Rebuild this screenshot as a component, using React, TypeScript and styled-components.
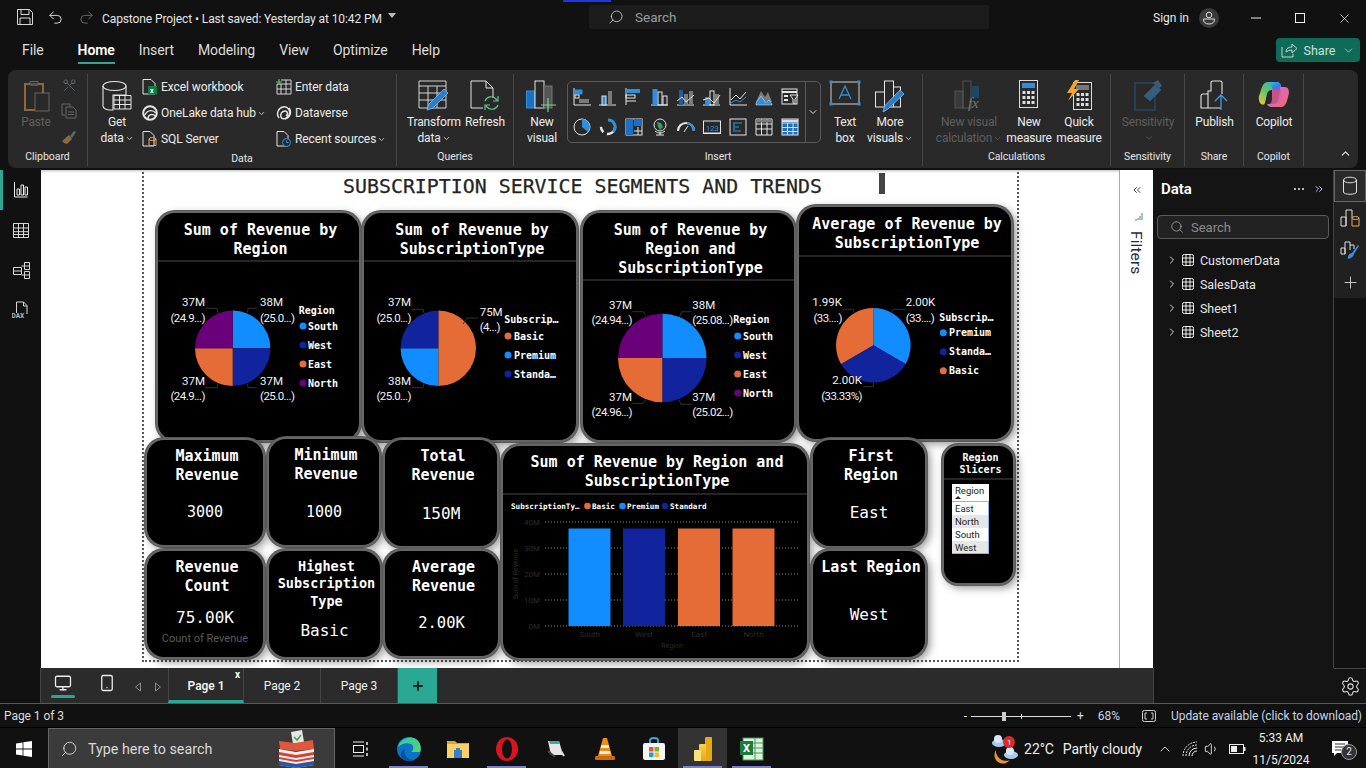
import React from "react";
import styled, { createGlobalStyle } from "styled-components";
import { Search, ChevronDown, ChevronRight, ChevronUp, ChevronsLeft, ChevronsRight, X, Settings, Scissors, Undo2, Redo2, Plus, Monitor, Smartphone, Volume1 } from "lucide-react";

const UI = `Roboto, "Open Sans", sans-serif`;
const MONO = `"DejaVu Sans Mono", "Liberation Mono", monospace`;
const BLUE = "#118DFF", NAVY = "#12239E", ORANGE = "#E66C37", PURPLE = "#6B007B", TEAL = "#2aa893";

const Global = createGlobalStyle`
  html, body { margin: 0; padding: 0; background: #111; overflow: hidden; }
  * { box-sizing: border-box; }
  #root { width: 1366px; height: 768px; }
`;

const Page = styled.div`width:1366px;height:768px;display:flex;flex-direction:column;background:#111;color:#eee;font-family:${UI};overflow:hidden;`;

/* ---------- Title bar ---------- */
const TitleBar = styled.div`height:36px;display:flex;align-items:center;position:relative;flex:none;`;
const TitleLeft = styled.div`width:589px;display:flex;align-items:center;padding-left:17px;gap:14px;flex:none;margin-top:-2px;`;
const DocTitle = styled.span`font-size:12px;color:#e4e4e4;margin-left:-7px;margin-top:4px;white-space:nowrap;letter-spacing:-.1px;`;
const Caret = styled.span`width:0;height:0;border-left:4.5px solid transparent;border-right:4.5px solid transparent;border-top:5px solid #bbb;margin-left:-8px;margin-top:-3px;`;
const TopSearch = styled.div`width:400px;height:24px;margin-top:-2px;background:#1c1c1c;border-radius:2px;display:flex;align-items:center;gap:11px;padding-left:19px;font-size:13.5px;color:#9c9c9c;flex:none;`;
const TopLine = styled.div`position:absolute;left:563px;top:0;width:48px;height:2px;background:#2236e0;`;
const TitleRight = styled.div`flex:1;display:flex;align-items:center;justify-content:flex-end;`;
const SignIn = styled.span`font-size:12px;color:#e8e8e8;margin-right:10px;`;
const Avatar = styled.span`width:20px;height:20px;border-radius:50%;background:#3a3a3a;display:flex;align-items:center;justify-content:center;margin-right:15px;`;
const WinCtl = styled.span`width:44px;display:flex;justify-content:center;color:#eee;`;
const FlipSearch = styled(Search)`transform:scaleX(-1);flex:none;`;

/* ---------- Menu ---------- */
const MenuBar = styled.div`height:34px;display:flex;align-items:center;padding:0 0 6px 22px;gap:24px;flex:none;position:relative;`;
const MenuItem = styled.span<{ $active?: boolean }>`
  font-size:14px;color:${p => (p.$active ? "#fff" : "#dcdcdc")};font-weight:${p => (p.$active ? 600 : 400)};
  position:relative;line-height:28px;letter-spacing:-.1px;
  ${p => p.$active ? `&::after{content:"";position:absolute;left:0;right:0;bottom:0;height:2px;background:${TEAL};}` : ""}
  &:first-child{margin-right:10px;}
`;
const ShareBtn = styled.div`position:absolute;left:1276px;top:2px;width:84px;height:24px;background:#0d6b58;border-radius:4px;display:flex;align-items:center;justify-content:center;gap:7px;font-size:12.5px;color:#cfe3dd;`;

/* ---------- Ribbon ---------- */
const Ribbon = styled.div`margin-left:8px;width:1350px;height:98px;background:#292929;border-radius:8px;display:flex;flex:none;position:relative;`;
const Group = styled.div<{ $w: number }>`
  width:${p => p.$w}px;flex:none;display:flex;flex-direction:column;margin:4px 0 2px;border-right:1px solid #484848;
`;
const GroupBody = styled.div<{ $pl?: number }>`height:74px;display:flex;padding-left:${p => p.$pl ?? 0}px;`;
const GroupLabel = styled.div`flex:1;text-align:center;font-size:10.5px;color:#e6e6e6;line-height:18px;padding-top:2px;letter-spacing:-.05px;`;
const Big = styled.div<{ $w: number; $dim?: boolean }>`
  width:${p => p.$w}px;flex:none;display:flex;flex-direction:column;align-items:center;padding-top:6px;
  font-size:12px;line-height:16px;text-align:center;color:${p => (p.$dim ? "#5f5f5f" : "#ececec")};white-space:nowrap;letter-spacing:-.18px;
`;
const BigIcon = styled.div`height:34px;display:flex;align-items:flex-start;justify-content:center;flex:none;`;
const Chev = styled(ChevronDown)`display:inline-block;vertical-align:-1px;margin-left:1px;`;
const SmallCol = styled.div<{ $w: number; $pl?: number }>`width:${p => p.$w}px;flex:none;display:flex;flex-direction:column;padding-left:${p => p.$pl ?? 0}px;`;
const SmallRow = styled.div`height:26px;flex:none;display:flex;align-items:center;gap:3px;font-size:12px;color:#ececec;white-space:nowrap;letter-spacing:-.08px;`;
const ToolCol = styled.div`width:16px;margin-top:4px;display:flex;flex-direction:column;gap:10px;align-items:center;flex:none;`;
const Gallery = styled.div`width:254px;height:62px;margin:7px 7px 0 3px;border:1px solid #5a5a5a;border-radius:5px;display:flex;flex:none;`;
const GalleryGrid = styled.div`width:237px;display:grid;grid-template-columns:repeat(9,26px);grid-template-rows:30px 30px;align-items:center;justify-items:center;padding-left:1px;`;
const GalleryMore = styled.div`flex:1;border-left:1px solid #5a5a5a;display:flex;align-items:center;justify-content:center;color:#ddd;`;
const Collapse = styled.div`position:absolute;right:6px;bottom:4px;color:#e8e8e8;`;
const ScissorIcon = styled(Scissors)`transform:rotate(90deg);flex:none;`;

/* ---------- Main ---------- */
const Main = styled.div`height:498px;margin-top:2px;display:flex;flex:none;`;
const LeftRail = styled.div`width:41px;flex:none;background:#111;display:flex;flex-direction:column;align-items:center;position:relative;`;
const RailBtn = styled.div<{ $active?: boolean }>`
  width:41px;height:40px;display:flex;align-items:center;justify-content:center;position:relative;
  ${p => p.$active ? `&::before{content:"";position:absolute;left:0;top:0;bottom:0;width:3px;background:${TEAL};}` : ""}
`;
const Canvas = styled.div`width:1078px;flex:none;background:#fff;position:relative;overflow:hidden;box-shadow:inset 0 3px 3px -2px #bbb;`;
const ReportPage = styled.div`position:absolute;left:101px;top:-6px;width:877px;height:498px;border:2px dotted #555;border-top:none;`;
const ReportTitle = styled.div`position:absolute;left:0;top:11px;width:870px;padding-left:199px;font-family:${MONO};font-size:19.9px;line-height:24px;color:#252423;white-space:nowrap;-webkit-text-stroke:.25px #252423;`;
const Cursor = styled.span`position:absolute;left:735px;top:9px;width:6px;height:21px;background:#444;`;

const Card = styled.div<{ $x: number; $y: number; $w: number; $h: number; $r?: number }>`
  position:absolute;left:${p => p.$x - 144}px;top:${p => p.$y - 164}px;width:${p => p.$w}px;height:${p => p.$h}px;
  background:#000;border:2px solid #666;border-radius:${p => p.$r ?? 19}px;box-shadow:0 0 0 1px #5a5a5a,3px 3px 9px rgba(0,0,0,.42);color:#fff;overflow:hidden;
  font-family:${MONO};
`;
const CardTitle = styled.div<{ $h?: number; $rule?: boolean; $size?: number; $lh?: number; $pt?: number }>`
  ${p => (p.$h ? `height:${p.$h}px;` : "")}padding:${p => p.$pt ?? 7}px 0 0 4px;text-align:center;font-weight:700;font-size:${p => p.$size ?? 15}px;line-height:${p => p.$lh ?? 19}px;white-space:nowrap;
  ${p => (p.$rule ? "border-bottom:2px solid #252525;" : "")}
`;
const KpiValue = styled.div<{ $top: number; $size?: number }>`
  margin-top:${p => p.$top}px;text-align:center;font-size:${p => p.$size ?? 16}px;line-height:20px;
`;
const KpiSub = styled.div`text-align:center;font-family:${UI};font-size:11px;color:#5a5a5a;line-height:14px;margin-top:4px;`;
const ChartSvg = styled.svg`display:block;`;
const LabelText = styled.text<{ $tight?: boolean }>`font-family:${UI};font-size:11.5px;fill:#f2f2f2;letter-spacing:${p => (p.$tight ? "-.55px" : "0")};`;
const LegendText = styled.text<{ $s?: number }>`font-family:${MONO};font-weight:700;font-size:${p => p.$s ?? 10}px;fill:#fff;`;
const AxisText = styled.text<{ $s?: number }>`font-family:${UI};font-size:${p => p.$s ?? 8}px;fill:#2f2b29;`;
const SlicerBox = styled.div`width:37px;margin:4px 0 0 8px;font-family:${UI};font-size:9.5px;color:#252423;background:#fff;`;
const SlicerHead = styled.div`height:18px;padding:2px 0 0 3px;line-height:10px;position:relative;border-bottom:1px solid #7fb7ef;&::after{content:"";position:absolute;left:3px;bottom:2px;border-left:3px solid transparent;border-right:3px solid transparent;border-bottom:3px solid #252423;}`;
const SlicerItem = styled.div<{ $alt?: boolean }>`height:13px;line-height:13px;padding-left:3px;background:${p => (p.$alt ? "#e6e6e6" : "#fff")};border-right:1px solid #7fb7ef;&:last-child{border-bottom:1px solid #7fb7ef;}`;

const FilterPane = styled.div`width:34px;flex:none;background:#fff;border-left:1px solid #aaa;display:flex;flex-direction:column;align-items:center;color:#252423;position:relative;padding-top:14px;`;
const FilterGlyph = styled.div`margin-top:16px;margin-left:5px;`;
const FiltersLabel = styled.div`writing-mode:vertical-rl;font-size:15.5px;line-height:18px;color:#1a2b44;margin-top:9px;margin-left:-1px;letter-spacing:.1px;`;
const DataPane = styled.div`width:180px;flex:none;background:#141414;padding:0 4px;display:flex;flex-direction:column;`;
const DataHead = styled.div`height:38px;display:flex;align-items:center;padding-left:4px;`;
const DataTitle = styled.span`font-size:15px;font-weight:600;color:#fff;flex:1;`;
const PaneCollapse = styled(ChevronsRight)`margin:0 4px 0 7px;flex:none;`;
const DataSearch = styled.div`height:24px;margin-top:7px;border:1px solid #5a5a5a;border-radius:4px;background:#222;display:flex;align-items:center;gap:7px;padding-left:12px;font-size:13px;color:#8d8d8d;`;
const TreeList = styled.div`margin-top:9px;display:flex;flex-direction:column;`;
const TreeRow = styled.div`height:24px;display:flex;align-items:center;font-size:12.5px;color:#e6e6e6;padding-left:9px;gap:4px;letter-spacing:-.05px;`;
const TreeName = styled.span`margin-left:2px;`;
const RightRail = styled.div`width:33px;flex:none;background:#111;border-left:1px solid #444;display:flex;flex-direction:column;position:relative;`;
const RightTop = styled.div`background:#202020;height:128px;display:flex;flex-direction:column;align-items:center;`;
const RightBtn = styled.div<{ $active?: boolean }>`
  width:32px;height:32px;display:flex;align-items:center;justify-content:center;
  ${p => (p.$active ? "background:#2b2b2b;border:1px solid #666;" : "")}
`;
const Gear = styled.div`position:absolute;left:0;right:0;top:498px;height:35px;display:flex;align-items:center;justify-content:center;border-top:1px solid #444;color:#ddd;`;

/* ---------- Tabs & status ---------- */
const TabRow = styled.div`height:35px;display:flex;flex:none;`;
const TabLeft = styled.div`width:41px;flex:none;border-right:1px solid #444;`;
const TabBar = styled.div`width:1112px;flex:none;background:#2b2b2b;display:flex;align-items:stretch;`;
const ViewBtn = styled.div<{ $w: number; $active?: boolean }>`
  width:${p => p.$w}px;flex:none;display:flex;align-items:center;justify-content:center;position:relative;padding-bottom:6px;color:#eee;
  ${p => p.$active ? `&::after{content:"";position:absolute;left:10px;right:10px;bottom:5px;height:3px;border-radius:2px;background:${TEAL};}` : ""}
`;
const Arrow = styled.div`width:20px;display:flex;align-items:center;justify-content:center;flex:none;padding-top:2px;`;
const Tab = styled.div<{ $active?: boolean; $w: number }>`
  width:${p => p.$w}px;flex:none;display:flex;align-items:center;justify-content:center;font-size:12px;color:#f0f0f0;border-right:1px solid #454545;position:relative;
  font-weight:${p => (p.$active ? 600 : 400)};letter-spacing:-.05px;
  ${p => p.$active ? `background:#2b2b2b;border-bottom:3px solid ${TEAL};border-left:1px solid #454545;padding-top:3px;` : ""}
`;
const TabClose = styled.span`position:absolute;right:3px;top:1px;font-size:10px;font-weight:700;color:#fff;`;
const AddTab = styled.div`width:39px;flex:none;background:${TEAL};display:flex;align-items:center;justify-content:center;color:#1b2b28;`;
const RightFill = styled.div`flex:1;background:#141414;border-left:1px solid #444;`;
const StatusBar = styled.div`height:25px;flex:none;border-top:1px solid #5a5a5a;display:flex;align-items:center;font-size:12px;color:#dcdcdc;padding:1px 0 0 4px;letter-spacing:-.05px;border-bottom:1px solid #000;`;
const ZoomBox = styled.div`margin-left:auto;display:flex;align-items:center;`;
const ZoomTrack = styled.div`width:100px;height:1px;background:#ddd;margin:0 6px 0 4px;position:relative;
  &::before{content:"";position:absolute;left:31px;top:-4px;width:4px;height:9px;background:#ccc;}
  &::after{content:"";position:absolute;left:50px;top:-2px;width:1px;height:5px;background:#ddd;}`;
const Pct = styled.span`margin:0 22px 0 14px;color:#c8d4e6;`;
const FitWrap = styled.div`margin-right:15px;`;
const UpdateText = styled.span`margin-right:4px;color:#c8d4e6;`;

/* ---------- Taskbar ---------- */
const Taskbar = styled.div`height:41px;flex:none;display:flex;align-items:stretch;background:#111;`;
const StartBtn = styled.div`width:48px;display:flex;align-items:center;justify-content:center;flex:none;`;
const TaskSearch = styled.div`width:287px;flex:none;background:#3b3b3b;border:1px solid #666;display:flex;align-items:center;padding-left:11px;gap:10px;font-size:14.3px;color:#d9d9d9;position:relative;`;
const Ballot = styled.div`position:absolute;right:19px;top:1px;`;
const TaskItem = styled.div<{ $run?: boolean; $hi?: boolean }>`
  width:49px;flex:none;display:flex;align-items:center;justify-content:center;position:relative;
  ${p => (p.$hi ? "background:#333;" : "")}
  ${p => p.$run ? `&::after{content:"";position:absolute;left:5px;right:5px;bottom:0;height:3px;background:#7a7fd6;}` : ""}
`;
const Tray = styled.div`margin-left:auto;display:flex;align-items:center;font-size:14px;color:#eee;`;
const TrayText = styled.span<{ $ml: number }>`margin-left:${p => p.$ml}px;white-space:nowrap;letter-spacing:-.1px;`;
const TrayIcon = styled.span<{ $ml: number }>`margin-left:${p => p.$ml}px;display:flex;color:#eee;`;
const Clock = styled.div`width:64px;margin-left:3px;text-align:center;font-size:12px;line-height:22px;color:#eee;white-space:nowrap;`;
const Notif = styled.div`width:53px;display:flex;justify-content:center;position:relative;`;
const NotifBadge = styled.span`position:absolute;left:28px;top:3px;width:16px;height:16px;border-radius:50%;background:#333;border:1px solid #999;font-size:10px;display:flex;align-items:center;justify-content:center;color:#eee;`;

/* ---------- Icon helper ---------- */
const Ico: React.FC<{ w?: number; h?: number; vb?: string; children: React.ReactNode }> = ({ w = 16, h, vb, children }) => (
  <svg width={w} height={h ?? w} viewBox={vb ?? `0 0 ${w} ${h ?? w}`} fill="none" style={{ display: "block", flex: "none" }}>{children}</svg>
);
const L = "#e6e6e6", B = "#2f8fdc", G = "#7b7b7b";

const GetDataIcon = () => (
  <Ico w={30} h={34}>
    <path d="M1 6v20c0 2.5 4 4 7 4h3V15h13V6" stroke={L} strokeWidth="1.1" />
    <ellipse cx="12.5" cy="6" rx="11.5" ry="4.5" stroke={L} strokeWidth="1.1" />
    <path d="M12 15.5h17V29H12zM12 20h17M12 24.5h17M17.5 15.5V29M23 15.5V29" stroke={L} strokeWidth="1" />
  </Ico>
);
const ExcelDoc = () => (
  <Ico w={16}>
    <path d="M1 .5h8l4 4V15H1z" stroke={L} />
    <rect x="6" y="7" width="9" height="8.5" fill="#107c41" />
    <text x="8" y="14" fontSize="7" fontWeight="700" fontFamily="Roboto" fill="#fff">x</text>
  </Ico>
);
const OneLake = () => (
  <Ico w={16}>
    <circle cx="8" cy="8" r="6.8" stroke={L} strokeWidth="2" />
    <path d="M3 10c3-6 8-5 11-2M6 14c0-4 3-6 8-3" stroke={L} strokeWidth="1.4" />
  </Ico>
);
const SqlDoc = () => (
  <Ico w={16}>
    <path d="M1 .5h7l4 4V15H1z" stroke={L} />
    <path d="M7 8v6.5h7V8" stroke="#e9a74f" /><ellipse cx="10.5" cy="8" rx="3.5" ry="1.6" stroke="#e9a74f" />
  </Ico>
);
const EnterData = () => (
  <Ico w={16}>
    <path d="M5 1h10v14H1V5M1 5h14M1 10h14M5 5v10M10 1v14" stroke={L} strokeWidth=".9" />
    <path d="M3 0v6M0 3h6" stroke="#58c26c" strokeWidth="1.2" />
  </Ico>
);
const Dataverse = () => (
  <Ico w={16}>
    <path d="M3 13C0 9 2 3 7 2s8 4 6 8-7 5-8 2 1-6 4-6 3 4 1 5" stroke={L} strokeWidth="1.5" />
    <path d="M13 3c3 4 1 10-4 11" stroke={L} strokeWidth="1.5" />
  </Ico>
);
const RecentDoc = () => (
  <Ico w={16}>
    <path d="M1 .5h7l4 4V15H1z" stroke={L} />
    <circle cx="10.5" cy="11.5" r="4" fill="#292929" stroke="#3a8fd8" />
    <path d="M10.5 9.5v2h2" stroke="#3a8fd8" />
  </Ico>
);
const TransformIcon = () => (
  <Ico w={32}>
    <path d="M1 1h27v27H1zM1 6h27M1 13h27M1 20h27M10 6v22M19 6v22" stroke={L} strokeWidth=".9" />
    <path d="M9 30l2-6L26 9l4 4-15 15z" fill="#2a7dc6" stroke="#7fc0f0" strokeWidth=".8" />
  </Ico>
);
const RefreshIcon = () => (
  <Ico w={30} h={32}>
    <path d="M1 1h15l7 7v10M1 1v27h12M16 1v7h7" stroke={L} />
    <path d="M15 21a6.5 6.5 0 0 1 11-2l1.5 1.5M28 25a6.5 6.5 0 0 1-11 2l-1.5-1.5" stroke="#58c98c" strokeWidth="1.2" />
    <path d="M28 16v5h-5M15 30v-5h5" stroke="#58c98c" strokeWidth="1.2" />
  </Ico>
);
const NewVisual = () => (
  <Ico w={32} h={34}>
    <rect x="0.5" y="11" width="8" height="17" fill="#1d6fc4" stroke={B} />
    <rect x="9" y="1" width="9" height="27" stroke={L} />
    <rect x="18" y="6" width="8" height="22" fill="#555" stroke="#777" />
    <path d="M22 18v14M15 25h15" stroke="#74d88a" strokeWidth="1.2" />
  </Ico>
);
const TextBoxIcon = () => (
  <Ico w={32} h={26}>
    <rect x="2" y="2" width="28" height="22" stroke="#cfcfcf" />
    {[[2, 2], [30, 2], [2, 24], [30, 24]].map(([x, y], i) => <rect key={i} x={x - 1.5} y={y - 1.5} width="3" height="3" fill={B} />)}
    <path d="M10 19l6-13 6 13M12 15h8" stroke={B} strokeWidth="1.3" />
  </Ico>
);
const MoreVisuals = () => (
  <Ico w={30} h={33}>
    <rect x="0.5" y="12" width="9" height="15" stroke={L} />
    <rect x="9.5" y="1" width="9" height="26" stroke={L} />
    <rect x="18.5" y="7" width="7" height="20" stroke={L} />
    <path d="M8 32l1.5-6L25 10l4 4-16 15z" fill="#2a7dc6" stroke="#7fc0f0" strokeWidth=".8" />
  </Ico>
);
const VisualCalc = () => (
  <Ico w={30} h={32}>
    <rect x="1" y="11" width="8" height="17" fill="#3a3a3a" stroke="#555" />
    <rect x="9" y="1" width="8" height="27" stroke="#555" />
    <rect x="17" y="6" width="8" height="12" fill="#1e4565" />
    <text x="14" y="28" fontFamily="Liberation Serif" fontStyle="italic" fontSize="15" fill="#777">fx</text>
  </Ico>
);
const Calc = ({ top = B }: { top?: string }) => (
  <Ico w={20} h={29}>
    <rect x=".5" y=".5" width="18" height="27" fill="#2a2a2a" stroke="#ddd" />
    <rect x="3" y="3" width="13" height="5" fill={top} />
    {[11, 16, 21].flatMap(y => [3.5, 8, 12.5].map(x => <rect key={`${x}${y}`} x={x} y={y} width="3" height="3" fill="#ddd" />))}
  </Ico>
);
const QuickMeasure = () => (
  <Ico w={27} h={32}>
    <g transform="translate(7,2)">
      <rect x=".5" y=".5" width="18" height="27" stroke="#ddd" />
      <rect x="3" y="3" width="13" height="5" fill="#777" />
      {[11, 16, 21].flatMap(y => [3.5, 8, 12.5].map(x => <rect key={`${x}${y}`} x={x} y={y} width="3" height="3" fill="#ddd" />))}
    </g>
    <path d="M9 0L1 13h5L2 21l11-12H8l5-9z" fill="#f2a52e" />
  </Ico>
);
const SensitivityIcon = () => (
  <Ico w={30} h={32}>
    <rect x="2" y="3" width="20" height="27" stroke="#27577c" />
    <path d="M11 16L22 5l6 5-11 11z" fill="#3a5e7a" stroke="#27577c" />
    <path d="M20 3l5-3 4 6-3 2z" fill="#3a5e7a" />
  </Ico>
);
const PublishIcon = () => (
  <Ico w={30} h={32}>
    <path d="M1 28V16q0-2 2-2h5v14zM8 14v-3h3V2q0-1 2-1h7q2 0 2 1v12M8 28h13" stroke={L} strokeWidth="1.1" />
    <path d="M21 30V15M15 21l6-6 6 6" stroke="#3a9be8" strokeWidth="1.3" />
  </Ico>
);
const CopilotIcon = () => (
  <Ico w={32} vb="0 0 32 32">
    <defs>
      <linearGradient id="cp1" x1="0" y1="0" x2="1" y2="1"><stop offset="0" stopColor="#28c6f0" /><stop offset=".5" stopColor="#3a7be0" /><stop offset="1" stopColor="#7a5bd8" /></linearGradient>
      <linearGradient id="cp2" x1="0" y1="1" x2="1" y2="0"><stop offset="0" stopColor="#f6c33b" /><stop offset=".45" stopColor="#5fc56b" /><stop offset="1" stopColor="#2fa4e8" /></linearGradient>
      <linearGradient id="cp3" x1="0" y1="0" x2="1" y2="1"><stop offset="0" stopColor="#c96bd8" /><stop offset="1" stopColor="#ef6b72" /></linearGradient>
    </defs>
    <path d="M10 2h9q3 0 4 4l1 4H14q-4 0-5 4l-2 9q-1 3-4 1-3-3-2-8l3-9q2-5 6-5z" fill="url(#cp2)" />
    <path d="M12 2h7q3 0 4 4l1 4h-9q-2-4-3-8z" fill="url(#cp1)" />
    <path d="M22 7h5q4 0 4 6l-2 8q-2 6-6 6h-9q-4 0-5-3h6q4 0 5-4l2-9q0-3 0-4z" fill="url(#cp3)" />
    <path d="M14 10h10l-2 10q-1 3-5 4h-5q2-2 2-5z" fill="#e25a9e" opacity=".85" />
  </Ico>
);

const GalleryIcon = ({ k }: { k: number }) => {
  const s = L;
  return (
    <Ico w={18}>
      {k === 0 && <><path d="M1 0v17h17" stroke={s} /><rect x="2" y="2" width="7" height="4" fill={B} stroke={B} /><rect x="2" y="7" width="4" height="3" stroke={s} /><rect x="6" y="11" width="10" height="4" fill={G} /></>}
      {k === 1 && <><path d="M0 17h17" stroke={s} /><rect x="3" y="8" width="4" height="9" fill={B} stroke={s} /><rect x="9" y="3" width="4" height="14" fill={G} /></>}
      {k === 2 && <><path d="M1 0v17" stroke={s} /><rect x="1" y="1" width="14" height="4" fill={B} /><rect x="1" y="7" width="9" height="3" stroke={s} /><path d="M1 13h10" stroke={s} /></>}
      {k === 3 && <><path d="M0 17h17" stroke={s} /><rect x="1.5" y="1" width="5" height="16" fill={B} /><rect x="7" y="4" width="4" height="13" stroke={s} /><rect x="12" y="8" width="4" height="9" stroke={s} /></>}
      {k === 4 && <><path d="M0 17h17" stroke={s} /><rect x="2" y="2" width="4" height="15" fill="#1d5fa0" /><rect x="7" y="6" width="4" height="11" fill={G} /><rect x="12" y="3" width="4" height="14" fill={G} /><path d="M0 13l5-4 4 5 8-7" stroke={s} /></>}
      {k === 5 && <><path d="M0 17h17" stroke={s} /><rect x="2" y="9" width="4" height="8" fill={B} /><rect x="7" y="3" width="4" height="14" stroke={s} /><rect x="12" y="6" width="4" height="11" fill={G} /><path d="M0 12l6-2 5 5 6-8" stroke={s} /></>}
      {k === 6 && <><path d="M1 0v17h17" stroke={s} /><path d="M2 12l5-5 4 4 6-7" stroke={s} /><path d="M2 15l5-3 4 2 6-5" stroke={B} /></>}
      {k === 7 && <><path d="M1 14L6 3l4 6 3-5 4 10z" fill={G} /><path d="M1 17v-2l5-7 5 7 3-3 3 4v1z" fill={B} stroke={s} strokeWidth=".5" /></>}
      {k === 8 && <><rect x="1" y="1" width="15" height="15" stroke={s} /><path d="M1 4h15" stroke={s} strokeWidth="2" /><rect x="3" y="7" width="4" height="2" fill={s} /><rect x="3" y="11" width="4" height="2" fill={s} /><path d="M9 7h8l-3 4v5l-2-1v-4z" fill="#292929" stroke={s} /></>}
      {k === 9 && <><circle cx="9" cy="9" r="8" stroke={s} /><path d="M9 9V1a8 8 0 0 1 6 13z" fill={B} /></>}
      {k === 10 && <><circle cx="9" cy="9" r="7" stroke={s} strokeWidth="2.5" strokeDasharray="12 4 6 22" /><path d="M9 2a7 7 0 0 1 5 12" stroke={B} strokeWidth="3" /></>}
      {k === 11 && <><rect x="1" y="1" width="16" height="16" stroke={s} /><rect x="1" y="1" width="7" height="16" fill="#1d6fc4" /><rect x="9" y="1" width="8" height="7" fill="#1d6fc4" /><path d="M13 9v8M9 13h8" stroke={s} /></>}
      {k === 12 && <><circle cx="9" cy="7" r="6" stroke={s} /><path d="M6 4l4 1 2 4-3 3-2-3z" fill="#3e9a5c" /><path d="M4 13a7 7 0 0 0 10 0M5 17h8M9 14v3" stroke={s} /></>}
      {k === 13 && <><path d="M1 13a8 8 0 0 1 16 0" stroke={s} strokeWidth="2.2" /><path d="M10 5a8 8 0 0 1 7 8" stroke={B} strokeWidth="2.2" /><path d="M7 14l4-6" stroke={s} /></>}
      {k === 14 && <><rect x="0.5" y="3" width="17" height="12" stroke={s} /><path d="M0 15.5h18" stroke={s} /><text x="3" y="12.5" fontFamily="Roboto" fontSize="7.5" fill={B}>123</text></>}
      {k === 15 && <><rect x="1" y="1" width="16" height="16" stroke={s} /><path d="M5 4v10M6 5h7M6 9h4M6 13h6" stroke={B} strokeWidth="1.2" /></>}
      {k === 16 && <><path d="M1 1h16v16H1zM1 6h16M1 11h16M6.5 1v16M12 1v16" stroke={s} /><path d="M1 3h16" stroke={G} strokeWidth="3" /></>}
      {k === 17 && <><rect x="1" y="1" width="16" height="16" fill="#1d6fc4" stroke={s} /><path d="M1 5h16M1 9.5h16M1 13.5h16M6.5 5v12M12 5v12" stroke="#ddd" /><path d="M1 3h16" stroke="#ddd" strokeWidth="2" /></>}
    </Ico>
  );
};

const PasteIcon = () => (
  <Ico w={28} h={33}>
    <path d="M3 4h18v26H3z" stroke="#8a6a3c" strokeWidth="2" />
    <path d="M8 4V1.5h8V4" stroke="#666" /><rect x="8" y="3" width="8" height="3" fill="#555" />
    <rect x="13" y="13" width="14" height="18" fill="#292929" stroke="#666" />
  </Ico>
);
const CopyIcon = () => (
  <Ico w={16}><path d="M1 1h8v3M1 1v11h3" stroke="#666" /><path d="M5 4h7l3 3v8H5z" stroke="#666" /><path d="M7 9h6M7 11.5h6" stroke="#666" /></Ico>
);
const BrushIcon = () => (
  <Ico w={16}><path d="M9 7l4-5 2 1-4 6z" fill="#666" /><path d="M1 12l7-6 3 4-5 5q-3 0-5-3z" fill="#8a6a3c" /></Ico>
);
const SaveIcon = () => (
  <Ico w={16}><path d="M.5.5h12l3 3v12H.5zM4 .5v5h8v-5M3 15.5V9h10v6.5" stroke="#d8d8d8" /></Ico>
);
const RailIcon = ({ k }: { k: number }) => (
  <Ico w={18}>
    {k === 0 && <path d="M2.5 1v15h13M5 14V8h2.5v6zM9 14V4h2.5v10zM13 14V6h2.5v8z" stroke="#eee" />}
    {k === 1 && <path d="M1.5 2.5h15v14h-15zM1.5 7h15M1.5 10.7h15M1.5 13.5h15M6.5 2.5v14M11.5 2.5v14" stroke="#d8d8d8" />}
    {k === 2 && <path d="M1.5 6.5h8v7h-8zM1.5 10h8M9.5 5h3M9.5 14h3M12.5 1.5h5v7h-5zM12.5 5h5M12.5 10.5h5v7h-5zM12.5 14h5" stroke="#d8d8d8" />}
    {k === 3 && <><path d="M4.5 12V1h7l3.5 3.5V13M11.5 1v4H15" stroke="#d8d8d8" /><text x="-.5" y="17" fontSize="6.5" fontWeight="700" fontFamily="Roboto" fill="#bbb">DAX</text></>}
  </Ico>
);
const GridCell = () => (
  <Ico w={12}><rect x=".5" y=".5" width="11" height="11" rx="2" stroke="#eee" /><path d="M.5 4h11M.5 8h11M4 .5v11M8 .5v11" stroke="#eee" /></Ico>
);
const WinLogo = () => (
  <Ico w={16}><path d="M0 2.4L6.6 1.4V7.6H0zM7.4 1.3L16 0V7.6H7.4zM0 8.4H6.6V14.6L0 13.6zM7.4 8.4H16V16L7.4 14.7z" fill="#fff" /></Ico>
);
const BallotIcon = () => (
  <Ico w={38} h={38}>
    <path d="M14 2l11-2 2 12-11 2z" fill="#e6e6e6" /><path d="M17 7l3 3 4-5" stroke="#3aa65a" strokeWidth="1.6" />
    <path d="M2 11l16 2 18-3 1 9-18 2-16-2z" fill="#e2573c" />
    <path d="M2 19l17 3 18-3v16l-18 3-17-3z" fill="#eee" />
    <path d="M2 22l17 3 18-3v3l-18 3-17-3zM2 27l17 3 18-3v2l-18 3-17-3z" fill="#d8412f" />
    <path d="M2 31l17 3 18-3v4l-18 3-17-3z" fill="#2a55a8" />
  </Ico>
);
const TaskViewIcon = () => (
  <Ico w={16}><path d="M1 1h11M1 15h11" stroke="#eee" /><rect x="1.5" y="4.5" width="10" height="7" stroke="#eee" /><path d="M15 1v3M15 6.5v3M15 12v3" stroke="#eee" strokeWidth="1.5" /></Ico>
);
const EdgeLogo = () => (
  <Ico w={26}>
    <defs><linearGradient id="ed" x1="0" y1="0" x2="1" y2="1"><stop offset="0" stopColor="#2fc7b0" /><stop offset="1" stopColor="#58d46a" /></linearGradient></defs>
    <circle cx="13" cy="13" r="12" fill="#0c74c8" />
    <path d="M2 11C4 3 13-1 20 3c4 3 6 8 4 13h-9c3-2 3-6 0-8-4-2-10 0-13 3z" fill="url(#ed)" />
    <path d="M9 13c-2 5 2 11 9 11-3 2-10 1-13-3-1-3 1-7 4-8z" fill="#0a4f9c" />
  </Ico>
);
const FolderLogo = () => (
  <Ico w={22}><path d="M0 3h8l2 2h12v4H0z" fill="#d9a52e" /><rect x="0" y="6" width="22" height="14" fill="#f6d365" /><rect x="7" y="12" width="8" height="8" fill="#3a7fc4" /><rect x="9" y="10" width="4" height="3" fill="#3a7fc4" /></Ico>
);
const OperaLogo = () => (
  <Ico w={24}><ellipse cx="12" cy="12" rx="11" ry="12" fill="#d9141e" /><ellipse cx="12" cy="12" rx="5" ry="9.5" fill="#111" /></Ico>
);
const SnipLogo = () => (
  <Ico w={20}><path d="M2 2h11l4 14H5z" fill="#e6e6e6" /><path d="M3 2h10l.8 3H4z" fill="#3fa8a0" /><path d="M2 12l7 6" stroke="#444" strokeWidth="2" /><path d="M15 12l3 5" stroke="#ddd" strokeWidth="2" /></Ico>
);
const VlcLogo = () => (
  <Ico w={20} h={24}><path d="M8 1h4l5 18H3z" fill="#f08a12" /><path d="M6.5 8h7l.8 3H5.7zM5 14h10l.7 3H4.3z" fill="#eee" /><rect x="0" y="19" width="20" height="4" rx="1" fill="#c96b0c" /></Ico>
);
const StoreLogo = () => (
  <Ico w={24}><path d="M8 6V3q0-2 4-2t4 2v3" stroke="#29b6e8" strokeWidth="1.8" /><rect x="1" y="6" width="22" height="17" rx="2" fill="#f5f5f5" /><rect x="7" y="10" width="4.5" height="4.5" fill="#e8562e" /><rect x="12.5" y="10" width="4.5" height="4.5" fill="#74b72e" /><rect x="7" y="15.5" width="4.5" height="4.5" fill="#1e9be0" /><rect x="12.5" y="15.5" width="4.5" height="4.5" fill="#f4b92e" /></Ico>
);
const PbiLogo = () => (
  <Ico w={20} h={26}>
    <defs><linearGradient id="pb" x1="0" y1="0" x2="0" y2="1"><stop offset="0" stopColor="#f6d24a" /><stop offset="1" stopColor="#e8a815" /></linearGradient></defs>
    <rect x="12" y="1" width="7" height="24" rx="1" fill="#e8a815" /><rect x="6" y="8" width="7" height="17" rx="1" fill="url(#pb)" /><rect x="1" y="14" width="7" height="11" rx="1" fill="#f8e27a" />
  </Ico>
);
const ExcelLogo = () => (
  <Ico w={24}>
    <rect x="3" y="1" width="20" height="22" fill="#dff0dd" stroke="#3f9a55" /><path d="M10 6h13M10 11h13M10 16h13M15 1v22" stroke="#3f9a55" />
    <rect x="0" y="4" width="13" height="14" fill="#1f7a3e" /><text x="3" y="15" fontFamily="Roboto" fontSize="11" fontWeight="700" fill="#fff">X</text>
  </Ico>
);
const WeatherIcon = () => (
  <Ico w={26} h={30}>
    <path d="M4 16a10 10 0 0 0 14 10 8 8 0 0 1-14-10z" fill="#e8932e" />
    <ellipse cx="7" cy="9" rx="7" ry="4" fill="#a9c9ef" /><ellipse cx="6" cy="5" rx="4" ry="4" fill="#d9e8f8" />
    <ellipse cx="19" cy="21" rx="7" ry="4" fill="#a9c9ef" /><ellipse cx="18" cy="17" rx="4" ry="4" fill="#d9e8f8" />
    <circle cx="17" cy="8" r="6" fill="#d62b2b" /><text x="15" y="11" fontFamily="Roboto" fontSize="8" fill="#fff">1</text>
  </Ico>
);
const TriArrow = ({ left }: { left?: boolean }) => (
  <Ico w={8} h={10}><path d={left ? "M6.5 1v8L1.5 5z" : "M1.5 1v8l5-4z"} stroke="#8a8a8a" /></Ico>
);
const FitIcon = () => (
  <Ico w={14} h={12}><rect x=".5" y=".5" width="13" height="11" rx="2" stroke="#cfcfcf" /><path d="M5 3H3v6h2M9 3h2v6H9" stroke="#cfcfcf" /></Ico>
);
const NetIcon = () => (
  <Ico w={16}><path d="M1 15A14 14 0 0 1 15 1M4 15A11 11 0 0 1 15 4" stroke="#eee" strokeDasharray="2 1" /><path d="M7 15a8 8 0 0 1 8-8M10 15a5 5 0 0 1 5-5" stroke="#eee" /></Ico>
);
const BatteryIcon = () => (
  <Ico w={17} h={12}><rect x=".5" y="1.5" width="14" height="9" stroke="#eee" /><rect x="2" y="3" width="6" height="6" fill="#eee" /><rect x="15" y="4" width="1.5" height="4" fill="#eee" /></Ico>
);

/* ---------- Charts ---------- */
type Slice = { a0: number; a1: number; color: string };
type Lab = { x: number; y: number; anchor?: "start" | "end"; text: string };
type Leg = { y: number; color: string; text: string };
const pt = (cx: number, cy: number, r: number, a: number) => {
  const t = (a * Math.PI) / 180;
  return `${(cx + r * Math.sin(t)).toFixed(2)} ${(cy - r * Math.cos(t)).toFixed(2)}`;
};
const Pie: React.FC<{
  box: [number, number, number, number]; cx: number; cy: number; r: number; slices: Slice[]; labels: Lab[];
  leaders: string[]; head: { x: number; y: number; text: string }; legend: Leg[]; tx: number; dot: number;
}> = ({ box, cx, cy, r, slices, labels, leaders, head, legend, tx, dot }) => (
  <ChartSvg width={box[2]} height={box[3]} viewBox={box.join(" ")}>
    {slices.map((s, i) => (
      <path key={i} d={`M${cx} ${cy}L${pt(cx, cy, r, s.a0)}A${r} ${r} 0 ${s.a1 - s.a0 > 180 ? 1 : 0} 1 ${pt(cx, cy, r, s.a1)}Z`} fill={s.color} />
    ))}
    {leaders.map((p, i) => <polyline key={i} points={p} fill="none" stroke="#333" strokeWidth="1" />)}
    {labels.map((l, i) => <LabelText key={i} $tight={l.text.startsWith("(")} x={l.x} y={l.y} textAnchor={l.anchor ?? "start"} dominantBaseline="central">{l.text}</LabelText>)}
    <LegendText x={head.x} y={head.y} dominantBaseline="central">{head.text}</LegendText>
    {legend.map((l, i) => (
      <g key={i}>
        <circle cx={dot} cy={l.y} r="3.5" fill={l.color} />
        <LegendText x={tx} y={l.y} dominantBaseline="central">{l.text}</LegendText>
      </g>
    ))}
  </ChartSvg>
);
const quarters = (a: string, b: string, c: string, d: string): Slice[] => [
  { a0: 0, a1: 90, color: a }, { a0: 90, a1: 180, color: b }, { a0: 180, a1: 270, color: c }, { a0: 270, a1: 360, color: d },
];
const lg = (ys: number[], items: [string, string][]): Leg[] => items.map(([color, text], i) => ({ y: ys[i], color, text }));

const BarChart = () => {
  const ticks = [["40M", 522], ["30M", 548], ["20M", 574], ["10M", 600], ["0M", 626]] as const;
  const bars = [[568.5, BLUE, "South"], [623, NAVY, "West"], [678, ORANGE, "East"], [732.5, ORANGE, "North"]] as const;
  return (
    <ChartSvg width={303} height={163} viewBox="503 495 303 163">
      <LegendText $s={7.6} x={511} y={506} dominantBaseline="central">SubscriptionTy…</LegendText>
      {[[587.5, ORANGE, "Basic", 592], [622.5, BLUE, "Premium", 627], [665, NAVY, "Standard", 670]].map(([x, c, t, tx]) => (
        <g key={t as string}>
          <circle cx={x as number} cy={506} r="3.3" fill={c as string} />
          <LegendText $s={7.6} x={tx as number} y={506} dominantBaseline="central">{t as string}</LegendText>
        </g>
      ))}
      {ticks.map(([t, y]) => (
        <g key={t}>
          <AxisText x={540} y={y} textAnchor="end" dominantBaseline="central">{t}</AxisText>
          <line x1={545} x2={799} y1={y} y2={y} stroke="#8a8a8a" strokeWidth="1" strokeDasharray="1 2" />
        </g>
      ))}
      {bars.map(([x, c, t]) => (
        <g key={t}>
          <rect x={x} y={528.5} width={42} height={97.5} fill={c} />
          <AxisText x={x + 21} y={634} textAnchor="middle" dominantBaseline="central">{t}</AxisText>
        </g>
      ))}
      <AxisText $s={7} x={672} y={646} textAnchor="middle" dominantBaseline="central">Region</AxisText>
      <AxisText $s={7} x={0} y={0} textAnchor="middle" dominantBaseline="central" transform="translate(516,574) rotate(-90)">Sum of Revenue</AxisText>
    </ChartSvg>
  );
};

const Kpi: React.FC<{ x: number; y: number; w: number; h: number; title: string[]; value: string; top: number; size?: number; sub?: string; tsize?: number; tlh?: number }> =
  ({ x, y, w, h, title, value, top, size, sub, tsize, tlh }) => (
    <Card $x={x} $y={y} $w={w} $h={h}>
      <CardTitle $size={tsize} $lh={tlh}>{title.map(t => <div key={t}>{t}</div>)}</CardTitle>
      <KpiValue $top={top} $size={size}>{value}</KpiValue>
      {sub && <KpiSub>{sub}</KpiSub>}
    </Card>
  );

const gallery = Array.from({ length: 18 }, (_, i) => i);
const slicerItems = ["East", "North", "South", "West"];
const tree = ["CustomerData", "SalesData", "Sheet1", "Sheet2"];

export default function App() {
  return (
    <Page>
      <Global />
      <TitleBar>
        <TopLine />
        <TitleLeft>
          <SaveIcon />
          <Undo2 size={17} strokeWidth={1.4} color="#d8d8d8" />
          <Redo2 size={17} strokeWidth={1.4} color="#666" />
          <DocTitle>Capstone Project • Last saved: Yesterday at 10:42 PM</DocTitle>
          <Caret />
        </TitleLeft>
        <TopSearch><FlipSearch size={16} strokeWidth={1.3} color="#ccc" />Search</TopSearch>
        <TitleRight>
          <SignIn>Sign in</SignIn>
          <Avatar>
            <Ico w={14}><circle cx="7" cy="4" r="2.8" stroke="#ddd" /><path d="M1.5 8h11q0 5-5.5 5T1.5 8z" stroke="#ddd" /></Ico>
          </Avatar>
          <WinCtl><Ico w={12}><path d="M1 6h10" stroke="#eee" /></Ico></WinCtl>
          <WinCtl><Ico w={12}><rect x="1.5" y="1.5" width="9" height="9" stroke="#eee" /></Ico></WinCtl>
          <WinCtl><X size={15} strokeWidth={1.2} /></WinCtl>
        </TitleRight>
      </TitleBar>

      <MenuBar>
        <MenuItem>File</MenuItem>
        <MenuItem $active>Home</MenuItem>
        <MenuItem>Insert</MenuItem>
        <MenuItem>Modeling</MenuItem>
        <MenuItem>View</MenuItem>
        <MenuItem>Optimize</MenuItem>
        <MenuItem>Help</MenuItem>
        <ShareBtn>
          <Ico w={16}><path d="M1 5v10h11v-3M5 10q0-5 6-5V2l5 4.5L11 11V8q-4 0-6 2z" stroke="#cfe3dd" strokeWidth=".9" /></Ico>
          Share <ChevronDown size={13} strokeWidth={1.3} />
        </ShareBtn>
      </MenuBar>

      <Ribbon>
        <Group $w={80}>
          <GroupBody $pl={3}>
            <Big $w={50} $dim><BigIcon><PasteIcon /></BigIcon>Paste</Big>
            <ToolCol>
              <ScissorIcon size={15} strokeWidth={1.2} color="#6b7a88" />
              <CopyIcon />
              <BrushIcon />
            </ToolCol>
          </GroupBody>
          <GroupLabel>Clipboard</GroupLabel>
        </Group>

        <Group $w={309}>
          <GroupBody $pl={7}>
            <Big $w={44}><BigIcon><GetDataIcon /></BigIcon><span>Get</span><span>data<Chev size={9} /></span></Big>
            <SmallCol $w={137} $pl={3}>
              <SmallRow><ExcelDoc />Excel workbook</SmallRow>
              <SmallRow><OneLake /><span>OneLake data hub<Chev size={9} /></span></SmallRow>
              <SmallRow><SqlDoc />SQL Server</SmallRow>
            </SmallCol>
            <SmallCol $w={114}>
              <SmallRow><EnterData />Enter data</SmallRow>
              <SmallRow><Dataverse />Dataverse</SmallRow>
              <SmallRow><RecentDoc /><span>Recent sources<Chev size={9} /></span></SmallRow>
            </SmallCol>
          </GroupBody>
          <GroupLabel>Data</GroupLabel>
        </Group>

        <Group $w={117}>
          <GroupBody $pl={9}>
            <Big $w={56}><BigIcon><TransformIcon /></BigIcon><span>Transform</span><span>data<Chev size={9} /></span></Big>
            <Big $w={46}><BigIcon><RefreshIcon /></BigIcon>Refresh</Big>
          </GroupBody>
          <GroupLabel>Queries</GroupLabel>
        </Group>

        <Group $w={409}>
          <GroupBody $pl={6}>
            <Big $w={44}><BigIcon><NewVisual /></BigIcon><span>New</span><span>visual</span></Big>
            <Gallery>
              <GalleryGrid>{gallery.map(k => <GalleryIcon key={k} k={k} />)}</GalleryGrid>
              <GalleryMore><ChevronDown size={12} strokeWidth={2} /></GalleryMore>
            </Gallery>
            <Big $w={34}><BigIcon><TextBoxIcon /></BigIcon><span>Text</span><span>box</span></Big>
            <Big $w={56}><BigIcon><MoreVisuals /></BigIcon><span>More</span><span>visuals<Chev size={9} /></span></Big>
          </GroupBody>
          <GroupLabel>Insert</GroupLabel>
        </Group>

        <Group $w={188}>
          <GroupBody $pl={11}>
            <Big $w={70} $dim><BigIcon><VisualCalc /></BigIcon><span>New visual</span><span>calculation<Chev size={9} /></span></Big>
            <Big $w={50}><BigIcon><Calc /></BigIcon><span>New</span><span>measure</span></Big>
            <Big $w={50}><BigIcon><QuickMeasure /></BigIcon><span>Quick</span><span>measure</span></Big>
          </GroupBody>
          <GroupLabel>Calculations</GroupLabel>
        </Group>

        <Group $w={74}>
          <GroupBody>
            <Big $w={74} $dim><BigIcon><SensitivityIcon /></BigIcon><span>Sensitivity</span><span><Chev size={10} /></span></Big>
          </GroupBody>
          <GroupLabel>Sensitivity</GroupLabel>
        </Group>

        <Group $w={59}>
          <GroupBody><Big $w={59}><BigIcon><PublishIcon /></BigIcon>Publish</Big></GroupBody>
          <GroupLabel>Share</GroupLabel>
        </Group>

        <Group $w={60}>
          <GroupBody><Big $w={60}><BigIcon><CopilotIcon /></BigIcon>Copilot</Big></GroupBody>
          <GroupLabel>Copilot</GroupLabel>
        </Group>
        <Collapse><ChevronUp size={13} strokeWidth={2} /></Collapse>
      </Ribbon>

      <Main>
        <LeftRail>
          <RailBtn $active><RailIcon k={0} /></RailBtn>
          <RailBtn><RailIcon k={1} /></RailBtn>
          <RailBtn><RailIcon k={2} /></RailBtn>
          <RailBtn><RailIcon k={3} /></RailBtn>
        </LeftRail>

        <Canvas>
          <ReportPage>
            <ReportTitle>SUBSCRIPTION SERVICE SEGMENTS AND TRENDS</ReportTitle>
            <Cursor />

            <Card $x={156} $y={211} $w={205} $h={231}>
              <CardTitle $h={49} $rule $pt={8}>Sum of Revenue by<br />Region</CardTitle>
              <Pie box={[158, 262, 201, 178]} cx={232.7} cy={348.3} r={37.7}
                slices={quarters(BLUE, NAVY, ORANGE, PURPLE)}
                labels={[
                  { x: 205, y: 302, anchor: "end", text: "37M" }, { x: 205, y: 318, anchor: "end", text: "(24.9...)" },
                  { x: 260, y: 302, text: "38M" }, { x: 260, y: 318, text: "(25.0...)" },
                  { x: 205, y: 381, anchor: "end", text: "37M" }, { x: 205, y: 396, anchor: "end", text: "(24.9...)" },
                  { x: 260, y: 381, text: "37M" }, { x: 260, y: 396, text: "(25.0...)" },
                ]}
                leaders={["205.7,308.3 217,308.3 218,313", "256.7,308.3 248.3,308.3 247.3,312.7", "205.7,387.7 217.3,387.7 218,384", "256.7,387.7 248.3,387.7 247.3,384"]}
                head={{ x: 298.7, y: 310, text: "Region" }} dot={303} tx={308}
                legend={lg([326, 345, 364, 383], [[BLUE, "South"], [NAVY, "West"], [ORANGE, "East"], [PURPLE, "North"]])} />
            </Card>

            <Card $x={362} $y={211} $w={216} $h={231}>
              <CardTitle $h={49} $rule $pt={8}>Sum of Revenue by<br />SubscriptionType</CardTitle>
              <Pie box={[364, 262, 212, 178]} cx={438.3} cy={348.3} r={37.7}
                slices={[{ a0: 0, a1: 180, color: ORANGE }, { a0: 180, a1: 270, color: BLUE }, { a0: 270, a1: 360, color: NAVY }]}
                labels={[
                  { x: 411, y: 302, anchor: "end", text: "37M" }, { x: 411, y: 318, anchor: "end", text: "(25.0...)" },
                  { x: 479.7, y: 312, text: "75M" }, { x: 479.7, y: 327, text: "(4...)" },
                  { x: 411, y: 381, anchor: "end", text: "38M" }, { x: 411, y: 396, anchor: "end", text: "(25.0...)" },
                ]}
                leaders={["478,318 467,318 463,324", "411.7,309.3 423,309.3 424,313", "411.7,387.7 423,387.7 424,384"]}
                head={{ x: 504.3, y: 319, text: "Subscrip…" }} dot={508} tx={514}
                legend={lg([336, 355, 374], [[ORANGE, "Basic"], [BLUE, "Premium"], [NAVY, "Standa…"]])} />
            </Card>

            <Card $x={581} $y={211} $w={215} $h={231}>
              <CardTitle $h={68} $rule $pt={8}>Sum of Revenue by<br />Region and<br />SubscriptionType</CardTitle>
              <Pie box={[583, 281, 211, 159]} cx={662.3} cy={358} r={44.3}
                slices={quarters(BLUE, NAVY, ORANGE, PURPLE)}
                labels={[
                  { x: 632, y: 305, anchor: "end", text: "37M" }, { x: 632, y: 320, anchor: "end", text: "(24.94...)" },
                  { x: 692.3, y: 305, text: "38M" }, { x: 692.3, y: 320, text: "(25.08...)" },
                  { x: 632, y: 397, anchor: "end", text: "37M" }, { x: 632, y: 412, anchor: "end", text: "(24.96...)" },
                  { x: 692.3, y: 397, text: "37M" }, { x: 692.3, y: 412, text: "(25.02...)" },
                ]}
                leaders={["691.7,311.7 681.7,311.7 679.3,316.7", "632.3,311.7 643.3,311.7 645.7,315.7", "632.3,403.3 643.3,403.3 645.7,399.3", "691.7,404.3 681,404.3 679,400"]}
                head={{ x: 733.3, y: 319.3, text: "Region" }} dot={737.7} tx={743}
                legend={lg([336, 355, 374, 393], [[BLUE, "South"], [NAVY, "West"], [ORANGE, "East"], [PURPLE, "North"]])} />
            </Card>

            <Card $x={797} $y={205} $w={216} $h={236}>
              <CardTitle $h={50} $rule $pt={8}>Average of Revenue by<br />SubscriptionType</CardTitle>
              <Pie box={[799, 257, 212, 182]} cx={873.3} cy={345.3} r={37.3}
                slices={[{ a0: 0, a1: 120, color: BLUE }, { a0: 120, a1: 240, color: NAVY }, { a0: 240, a1: 360, color: ORANGE }]}
                labels={[
                  { x: 842, y: 302, anchor: "end", text: "1.99K" }, { x: 842, y: 318, anchor: "end", text: "(33....)" },
                  { x: 905.7, y: 302, text: "2.00K" }, { x: 905.7, y: 318, text: "(33....)" },
                  { x: 862, y: 380, anchor: "end", text: "2.00K" }, { x: 862, y: 396, anchor: "end", text: "(33.33%)" },
                ]}
                leaders={["905,309.3 893.3,309.3 891,313.3", "842.7,309.3 853.3,309.3 854.3,312.7", "863.3,386.7 873.3,386.7 873.3,382.3"]}
                head={{ x: 939.3, y: 317.7, text: "Subscrip…" }} dot={943.3} tx={949}
                legend={lg([332.7, 351.7, 370.7], [[BLUE, "Premium"], [NAVY, "Standa…"], [ORANGE, "Basic"]])} />
            </Card>

            <Kpi x={145} y={438} w={120} h={109} title={["Maximum", "Revenue"]} value="3000" top={17} size={15} />
            <Kpi x={267} y={437} w={114} h={110} title={["Minimum", "Revenue"]} value="1000" top={18} size={15} />
            <Kpi x={383} y={438} w={116} h={110} title={["Total", "Revenue"]} value="150M" top={19} />
            <Kpi x={145} y={549} w={120} h={110} title={["Revenue", "Count"]} value="75.00K" top={12} sub="Count of Revenue" />
            <Kpi x={267} y={549} w={115} h={110} title={["Highest", "Subscription", "Type"]} tsize={13.5} tlh={17.3} value="Basic" top={11} />
            <Kpi x={383} y={549} w={117} h={109} title={["Average", "Revenue"]} value="2.00K" top={17} size={15.5} />

            <Card $x={501} $y={444} $w={308} $h={216}>
              <CardTitle $h={49} $rule>Sum of Revenue by Region and<br />SubscriptionType</CardTitle>
              <BarChart />
            </Card>

            <Kpi x={811} y={438} w={116} h={110} title={["First", "Region"]} value="East" top={18} />
            <Kpi x={811} y={549} w={116} h={110} title={["Last Region"]} value="West" top={28} />

            <Card $x={942} $y={444} $w={73} $h={141} $r={16}>
              <CardTitle $h={34} $rule $size={10} $lh={12} $pt={6}>Region<br />Slicers</CardTitle>
              <SlicerBox>
                <SlicerHead>Region</SlicerHead>
                {slicerItems.map((s, i) => <SlicerItem key={s} $alt={i % 2 === 1}>{s}</SlicerItem>)}
              </SlicerBox>
            </Card>
          </ReportPage>
        </Canvas>

        <FilterPane>
          <ChevronsLeft size={12} strokeWidth={2} color="#3a4a5a" />
          <FilterGlyph><Ico w={10} h={10} vb="0 0 10 10"><path d="M1 8h2M4 8V6M6 8V4M8 8V1" stroke="#5a7a9a" /></Ico></FilterGlyph>
          <FiltersLabel>Filters</FiltersLabel>
        </FilterPane>

        <DataPane>
          <DataHead>
            <DataTitle>Data</DataTitle>
            <Ico w={14} h={6} vb="0 0 14 6"><path d="M2 3h2M6 3h2M10 3h2" stroke="#eee" strokeWidth="1.6" /></Ico>
            <PaneCollapse size={12} strokeWidth={1.8} color="#b8d4f0" />
          </DataHead>
          <DataSearch><Search size={14} strokeWidth={1.2} color="#bbb" />Search</DataSearch>
          <TreeList>
            {tree.map(t => (
              <TreeRow key={t}><ChevronRight size={12} strokeWidth={2} color="#ddd" /><GridCell /><TreeName>{t}</TreeName></TreeRow>
            ))}
          </TreeList>
        </DataPane>

        <RightRail>
          <RightTop>
            <RightBtn $active>
              <Ico w={16} h={20}><path d="M1.5 4v12c0 3 13 3 13 0V4" stroke="#ddd" /><ellipse cx="8" cy="4" rx="6.5" ry="2.8" stroke="#ddd" /></Ico>
            </RightBtn>
            <RightBtn>
              <Ico w={20} h={20}><path d="M1 18V9h5v9zM6 18V2h6v8" stroke="#ddd" /><path d="M12 10v8h7v-8" stroke="#e9a74f" /><ellipse cx="15.5" cy="10" rx="3.5" ry="1.5" stroke="#e9a74f" /></Ico>
            </RightBtn>
            <RightBtn>
              <Ico w={20} h={20}><path d="M1 14V8h4v6zM5 14V2h5v8M10 5h4v4" stroke="#ddd" /><path d="M8 19q-1-5 4-6l6-8 1 1-5 8q-1 4-6 5z" fill="#3a8fd8" /></Ico>
            </RightBtn>
            <RightBtn><Plus size={19} strokeWidth={1} color="#eee" /></RightBtn>
          </RightTop>
          <Gear><Settings size={21} strokeWidth={1.2} /></Gear>
        </RightRail>
      </Main>

      <TabRow>
        <TabLeft />
        <TabBar>
          <ViewBtn $w={44} $active><Monitor size={18} strokeWidth={1.7} /></ViewBtn>
          <ViewBtn $w={43}><Smartphone size={18} strokeWidth={1.7} /></ViewBtn>
          <Arrow><TriArrow left /></Arrow>
          <Arrow><TriArrow /></Arrow>
          <Tab $w={76} $active>Page 1<TabClose>x</TabClose></Tab>
          <Tab $w={77}>Page 2</Tab>
          <Tab $w={77}>Page 3</Tab>
          <AddTab><Plus size={14} strokeWidth={3.5} /></AddTab>
        </TabBar>
        <RightFill />
      </TabRow>

      <StatusBar>
        Page 1 of 3
        <ZoomBox>
          <span>-</span>
          <ZoomTrack />
          <span>+</span>
          <Pct>68%</Pct>
          <FitWrap><FitIcon /></FitWrap>
          <UpdateText>Update available (click to download)</UpdateText>
        </ZoomBox>
      </StatusBar>

      <Taskbar>
        <StartBtn><WinLogo /></StartBtn>
        <TaskSearch>
          <FlipSearch size={18} strokeWidth={1.2} color="#ddd" />
          Type here to search
          <Ballot><BallotIcon /></Ballot>
        </TaskSearch>
        <TaskItem><TaskViewIcon /></TaskItem>
        <TaskItem $run><EdgeLogo /></TaskItem>
        <TaskItem><FolderLogo /></TaskItem>
        <TaskItem $run><OperaLogo /></TaskItem>
        <TaskItem><SnipLogo /></TaskItem>
        <TaskItem><VlcLogo /></TaskItem>
        <TaskItem><StoreLogo /></TaskItem>
        <TaskItem $run $hi><PbiLogo /></TaskItem>
        <TaskItem $run><ExcelLogo /></TaskItem>
        <Tray>
          <WeatherIcon />
          <TrayText $ml={6}>22°C</TrayText>
          <TrayText $ml={9}>Partly cloudy</TrayText>
          <TrayIcon $ml={15}><ChevronUp size={16} strokeWidth={1.3} /></TrayIcon>
          <TrayIcon $ml={9}><NetIcon /></TrayIcon>
          <TrayIcon $ml={6}><Volume1 size={16} strokeWidth={1.3} /></TrayIcon>
          <TrayIcon $ml={9}><BatteryIcon /></TrayIcon>
          <Clock>5:33 AM<br />11/5/2024</Clock>
          <Notif>
            <Ico w={16} h={16}><path d="M0 0h16v12H5l-3 3v-3H0z" fill="#fff" /><path d="M3 3h10M3 6h10M3 9h6" stroke="#333" /></Ico>
            <NotifBadge>2</NotifBadge>
          </Notif>
        </Tray>
      </Taskbar>
    </Page>
  );
}
